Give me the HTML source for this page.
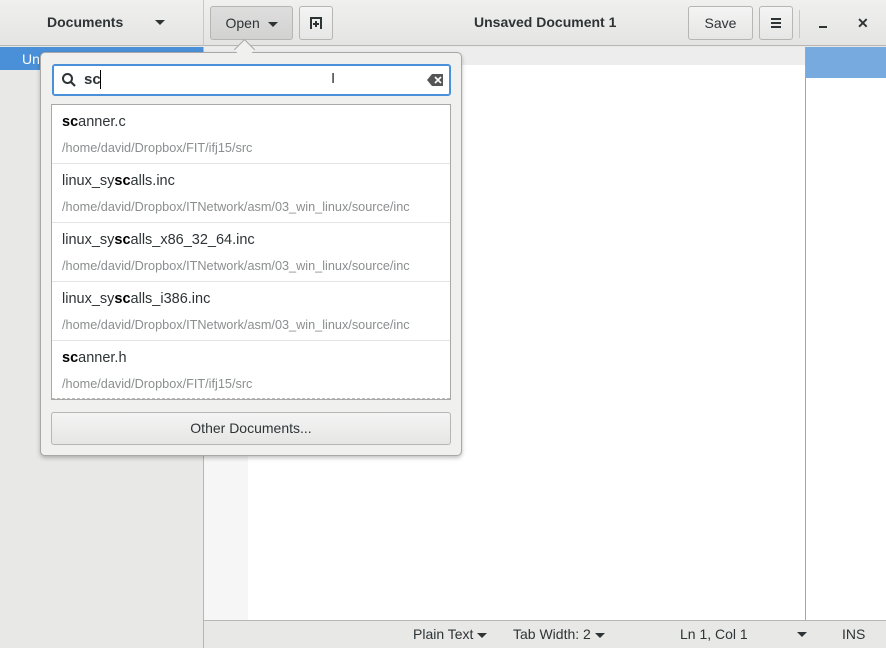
<!DOCTYPE html>
<html><head><meta charset="utf-8"><style>
*{box-sizing:border-box;margin:0;padding:0}
body{width:886px;height:648px;overflow:hidden;font-family:"Liberation Sans",sans-serif;font-size:14px;color:#2e3436;background:#e8e8e7;position:relative}
.abs{position:absolute}
.hdr{left:0;top:0;width:886px;height:46px;background:linear-gradient(#f0f0ef,#e4e4e3);border-bottom:1px solid #b6b6b3}
.btn{position:absolute;border:1px solid #b6b6b3;border-radius:3px;background:linear-gradient(#f4f4f4,#e6e6e5);text-align:center;line-height:30px;font-size:14px}
.tri{display:inline-block;width:0;height:0;border-left:5px solid transparent;border-right:5px solid transparent;border-top:5px solid #2e3436;vertical-align:middle}
.row{position:absolute;left:0;width:398px;height:59px;border-bottom:1px solid #e4e4e4;background:#fff}
.row .t{position:absolute;left:10px;top:9px;font-size:14.5px;color:#2e3436}
.row .p{position:absolute;left:10px;top:36px;font-size:12.7px;color:#8b8e8f}
b{font-weight:bold;color:#000}
</style></head><body>
<div class="abs hdr"></div>
<div class="abs" style="left:203px;top:0;width:1px;height:46px;background:#c8c8c6"></div>
<div class="abs" style="left:47px;top:14px;font-weight:bold;font-size:14px">Documents</div>
<div class="abs tri" style="left:155px;top:20px"></div>
<div class="btn" style="left:210px;top:6px;width:83px;height:34px;background:linear-gradient(#dedede,#d2d2d1);line-height:32px">Open&nbsp;&nbsp;<span class="tri"></span></div>
<div class="btn" style="left:299px;top:6px;width:34px;height:34px">
<svg width="16" height="16" viewBox="0 0 16 16" style="margin-top:8px"><path d="M3 14V3h10v11M8 6v6M5 9h6" stroke="#2e3436" stroke-width="2" fill="none"/></svg></div>
<div class="abs" style="left:474px;top:14px;font-weight:bold;font-size:14px">Unsaved Document 1</div>
<div class="btn" style="left:688px;top:6px;width:65px;height:34px;line-height:32px">Save</div>
<div class="btn" style="left:759px;top:6px;width:34px;height:34px">
<svg width="12" height="12" viewBox="0 0 12 12" style="margin-top:10px"><path d="M1 2h10M1 6h10M1 10h10" stroke="#2e3436" stroke-width="2"/></svg></div>
<div class="abs" style="left:799px;top:10px;width:1px;height:28px;background:#c8c8c6"></div>
<div class="abs" style="left:819px;top:26px;width:8px;height:2px;background:#2e3436"></div>
<div class="abs" style="left:857px;top:15px;font-size:14px;font-weight:bold">✕</div>
<!-- sidebar -->
<div class="abs" style="left:0;top:47px;width:203px;height:601px;background:#e8e8e7"></div>
<div class="abs" style="left:0;top:47px;width:203px;height:23px;background:#4a90d9;color:#fff;padding:4px 22px;font-size:14px">Unsaved Document 1</div>
<div class="abs" style="left:203px;top:47px;width:1px;height:601px;background:#b6b6b3"></div>
<!-- editor -->
<div class="abs" style="left:204px;top:47px;width:44px;height:573px;background:#f6f6f6"></div>
<div class="abs" style="left:248px;top:47px;width:557px;height:573px;background:#fff"></div>
<div class="abs" style="left:204px;top:47px;width:601px;height:18px;background:#ededed"></div>
<div class="abs" style="left:805px;top:47px;width:1px;height:573px;background:#a6a6a6"></div>
<div class="abs" style="left:806px;top:47px;width:80px;height:573px;background:#fff"></div>
<div class="abs" style="left:806px;top:47px;width:80px;height:31px;background:#77aadf"></div>
<!-- status bar -->
<div class="abs" style="left:204px;top:620px;width:682px;height:28px;background:#e8e8e7;border-top:1px solid #b6b6b3"></div>
<div class="abs" style="left:413px;top:626px;font-size:14px">Plain Text <span class="tri"></span></div>
<div class="abs" style="left:513px;top:626px;font-size:14px">Tab Width: 2 <span class="tri"></span></div>
<div class="abs" style="left:680px;top:626px;font-size:14px">Ln 1, Col 1</div>
<div class="abs tri" style="left:797px;top:632px"></div>
<div class="abs" style="left:842px;top:626px;font-size:14px">INS</div>
<!-- popover -->
<div class="abs" style="left:40px;top:52px;width:422px;height:404px;background:#f0f0ef;border:1px solid #a8a8a6;border-radius:5px;box-shadow:0 2px 4px rgba(0,0,0,.25)"></div>
<div class="abs" style="left:237px;top:42px;width:15px;height:15px;background:#f0f0ef;border-left:1px solid #a8a8a6;border-top:1px solid #a8a8a6;transform:rotate(45deg)"></div>
<div class="abs" style="left:52px;top:64px;width:399px;height:32px;background:#fff;border:1px solid #4a90d9;border-radius:3px;box-shadow:inset 0 0 0 1px #4a90d9"></div>
<svg class="abs" style="left:61px;top:72px" width="16" height="16" viewBox="0 0 16 16"><circle cx="6.5" cy="6.5" r="4.5" stroke="#2e3436" stroke-width="2" fill="none"/><path d="M10 10l4 4" stroke="#2e3436" stroke-width="2.2"/></svg>
<div class="abs" style="left:84px;top:71px;font-size:15px;font-weight:bold;color:#2e3436">sc</div>
<div class="abs" style="left:100px;top:70px;width:1px;height:19px;background:#000"></div>
<div class="abs" style="left:331px;top:70px;font-size:15px;color:#333">I</div>
<svg class="abs" style="left:427px;top:74px" width="16" height="12" viewBox="0 0 16 12"><path d="M5 0h11v12H5L0 6z" fill="#555"/><path d="M8 3l6 6M14 3l-6 6" stroke="#fff" stroke-width="1.6"/></svg>
<div class="abs" style="left:51px;top:104px;width:400px;height:296px;background:#fff;border:1px solid #a8a8a6;overflow:hidden">
<div class="row" style="top:0"><div class="t"><b>sc</b>anner.c</div><div class="p">/home/david/Dropbox/FIT/ifj15/src</div></div>
<div class="row" style="top:59px"><div class="t">linux_sy<b>sc</b>alls.inc</div><div class="p">/home/david/Dropbox/ITNetwork/asm/03_win_linux/source/inc</div></div>
<div class="row" style="top:118px"><div class="t">linux_sy<b>sc</b>alls_x86_32_64.inc</div><div class="p">/home/david/Dropbox/ITNetwork/asm/03_win_linux/source/inc</div></div>
<div class="row" style="top:177px"><div class="t">linux_sy<b>sc</b>alls_i386.inc</div><div class="p">/home/david/Dropbox/ITNetwork/asm/03_win_linux/source/inc</div></div>
<div class="row" style="top:236px;border-bottom:1px dashed #bbb;height:58px"><div class="t"><b>sc</b>anner.h</div><div class="p">/home/david/Dropbox/FIT/ifj15/src</div></div>
</div>
<div class="btn" style="left:51px;top:412px;width:400px;height:33px;line-height:31px">Other Documents...</div>
</body></html>
